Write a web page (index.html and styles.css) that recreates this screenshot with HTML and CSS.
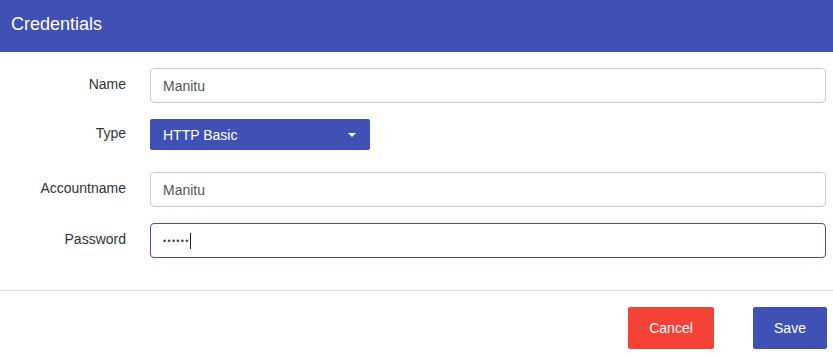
FILE: index.html
```html
<!DOCTYPE html>
<html>
  <head>
    <title>Credentials</title>
    <link rel="stylesheet" href="styles.css">
  </head>
  <body>
    <div class="dialog">
      <div class="dialog-header">
        <h2 class="dialog-title">Credentials</h2>
      </div>

      <form class="dialog-body">
        <div class="form-row">
          <label class="form-label">Name</label>
          <input class="form-input" type="text" value="Manitu">
        </div>

        <div class="form-row form-row-select">
          <label class="form-label">Type</label>
          <div class="select">
            <span>HTTP Basic</span>
            <svg class="select-caret" width="8" height="4" viewBox="0 0 8 4">
              <path d="M0 0 L8 0 L4 4 Z" fill="#fff" />
            </svg>
          </div>
        </div>

        <div class="form-row">
          <label class="form-label">Accountname</label>
          <input class="form-input" type="text" value="Manitu">
        </div>

        <div class="form-row">
          <label class="form-label">Password</label>
          <div class="form-input form-input-active">
            <span class="dots">••••••</span><span class="caret"></span>
          </div>
        </div>
      </form>

      <div class="dialog-footer">
        <button class="btn btn-cancel">Cancel</button>
        <button class="btn btn-save">Save</button>
      </div>
    </div>
  </body>
</html>
```

FILE: styles.css
```css
body {
  margin: 0;
  font-family: "Liberation Sans", Arial, sans-serif;
  font-size: 14px;
  color: #333;
  background: #fff;
}

.dialog-header {
  background: #3f51b5;
  height: 52px;
  display: flex;
  align-items: center;
  padding: 0 11px;
}

.dialog-title {
  margin: 0 0 4px 0;
  color: #fff;
  font-size: 18px;
  font-weight: normal;
}

.dialog-body {
  padding: 16px 7px 32px 0;
  margin: 0;
}

.form-row {
  display: flex;
  align-items: center;
  margin-bottom: 16px;
}

.form-row-select {
  margin-bottom: 22px;
}

.form-row:last-child {
  margin-bottom: 0;
}

.form-label {
  width: 126px;
  padding-right: 24px;
  text-align: right;
  color: #333;
  margin-top: -4px;
}

.form-input {
  flex: 1;
  box-sizing: border-box;
  height: 35px;
  padding: 0 12px;
  border: 1px solid #ccc;
  border-radius: 4px;
  font-family: inherit;
  font-size: 14px;
  color: #555;
  outline: none;
}

.form-input-active {
  display: flex;
  align-items: center;
  border-color: #3f51b5;
}

.dots {
  font-size: 9px;
  letter-spacing: 1.3px;
  color: #444;
}

.caret {
  display: inline-block;
  width: 1px;
  height: 16px;
  background: #222;
  margin-left: 0;
}

.select {
  box-sizing: border-box;
  width: 220px;
  height: 31px;
  padding: 0 14px 0 13px;
  display: flex;
  align-items: center;
  justify-content: space-between;
  background: #3f51b5;
  color: #fff;
  border-radius: 2px;
}

.dialog-footer {
  border-top: 1px solid #e3e3e3;
  display: flex;
  justify-content: flex-end;
  gap: 39px;
  padding: 16px 6px 0 0;
}

.btn {
  height: 42px;
  border: none;
  border-radius: 2px;
  color: #fff;
  font-family: inherit;
  font-size: 14px;
  cursor: pointer;
}

.btn-cancel {
  width: 86px;
  background: #f44336;
}

.btn-save {
  width: 74px;
  background: #3f51b5;
}
```
